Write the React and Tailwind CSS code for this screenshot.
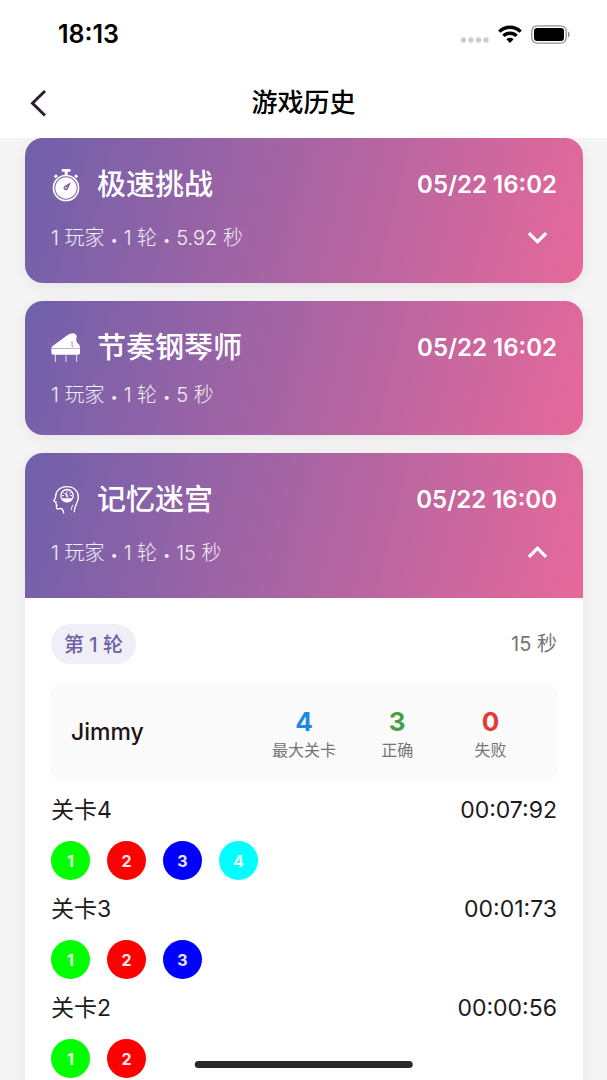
import React, { useState } from 'react';
import { MdExpandLess, MdExpandMore } from 'react-icons/md';

function StopwatchIcon() {
  return (
    <svg viewBox="0 0 90 99" className="w-[30px] h-[33px]" fill="none">
      <rect x="32" y="0" width="27" height="8" rx="3" fill="white" />
      <rect x="41" y="6" width="9" height="12" fill="white" />
      <path d="M11 25l7-6M79 25l-7-6" stroke="white" strokeWidth="8" />
      <circle cx="45" cy="57" r="37.5" stroke="white" strokeWidth="5" />
      <circle cx="45" cy="57" r="32" fill="white" />
      <path d="M60 40L51 59a7 7 0 1 1-9-9z" fill="#8062a8" />
      <circle cx="45" cy="56" r="2.5" fill="white" />
    </svg>
  );
}

function PianoIcon() {
  return (
    <svg viewBox="0 0 90 90" className="w-[30px] h-[30px]" fill="none">
      <path d="M1 45q0-3 4-6L50 6q14-8 23-3 6 5 3 13c-1 11 3 14 8 18q3 3 3 11z" fill="white" />
      <path d="M1 46.5h86v13q0 6-5 6H7q-6 0-6-6z" fill="white" />
      <path d="M63 24v16h5" stroke="#8a62a7" strokeWidth="2" />
      <path d="M13 65v22M45 65v22M77 65v22" stroke="white" strokeWidth="2.5" />
    </svg>
  );
}

function MemoryIcon() {
  return (
    <svg viewBox="0 0 90 90" className="w-[30px] h-[30px]" fill="none" stroke="white" strokeWidth="4" strokeLinecap="round" strokeLinejoin="round">
      <path d="M14 32C16 13 32 5 48 5c21 0 34 13 34 32 0 17-12 24-12 43" />
      <path d="M14 32c1 7-3 10-5 14-1 3 2 4 6 4v8l3 3-2 4c0 8 4 8 10 6 7-2 10 2 12 13" />
      <path d="M66 60c-4 5-5 10-5 14" strokeWidth="3" />
      <circle cx="48" cy="32" r="18.5" strokeWidth="4" />
      <path d="M32 40h32c-2 8-8 12-16 12s-14-4-16-12z" fill="white" stroke="none" />
      <path d="M48 18v4M37 23l3 3M59 23l-3 3M34 32h4M62 32h-4" strokeWidth="3" />
      <path d="M45 26l4 9" strokeWidth="5" />
    </svg>
  );
}

const COLORS = ['bg-[#00ff00]', 'bg-[#ff0000]', 'bg-[#0000ff]', 'bg-[#00ffff]'];

const games = [
  { id: 'speed', name: '极速挑战', date: '05/22 16:02', meta: ['1 玩家', '1 轮', '5.92 秒'], icon: StopwatchIcon, rounds: [] },
  { id: 'piano', name: '节奏钢琴师', date: '05/22 16:02', meta: ['1 玩家', '1 轮', '5 秒'], icon: PianoIcon },
  {
    id: 'memory',
    name: '记忆迷宫',
    date: '05/22 16:00',
    meta: ['1 玩家', '1 轮', '15 秒'],
    icon: MemoryIcon,
    rounds: [
      {
        title: '第 1 轮',
        duration: '15 秒',
        player: 'Jimmy',
        stats: [
          { label: '最大关卡', value: 4, color: 'text-[#1e88e5]' },
          { label: '正确', value: 3, color: 'text-[#43a047]' },
          { label: '失败', value: 0, color: 'text-[#e53935]' },
        ],
        levels: [
          { name: '关卡4', time: '00:07:92', steps: 4 },
          { name: '关卡3', time: '00:01:73', steps: 3 },
          { name: '关卡2', time: '00:00:56', steps: 2 },
        ],
      },
    ],
  },
];

function StatusBar() {
  return (
    <div className="h-[68px] pl-[58px] pr-[37px] flex items-center justify-between">
      <span className="text-[25px] leading-7 font-semibold">18:13</span>
      <div className="flex items-center gap-[9px]">
        <svg viewBox="0 0 30 20" className="w-[30px] h-5" fill="#cccccc">
          <circle cx="4.5" cy="16" r="2.7" />
          <circle cx="12" cy="16" r="2.7" />
          <circle cx="19.5" cy="16" r="2.7" />
          <circle cx="27" cy="16" r="2.7" />
        </svg>
        <svg viewBox="0 0 24 18" className="w-6 h-[18px]" fill="none" stroke="black" strokeWidth="3.4">
          <path d="M1.3 6.6a15.4 15.4 0 0 1 21.4 0" />
          <path d="M5.4 10.9a9.5 9.5 0 0 1 13.2 0" />
          <path d="M12 18l-3.6-3.8a5.2 5.2 0 0 1 7.2 0z" fill="black" stroke="none" />
        </svg>
        <svg viewBox="0 0 39 19" className="w-[39px] h-[19px]" fill="none">
          <rect x="0.8" y="0.8" width="34.4" height="17.4" rx="5.5" stroke="#8f8f8f" strokeWidth="1.3" />
          <rect x="3" y="3" width="30" height="13" rx="3.2" fill="black" />
          <path d="M37 6.5c2.2.8 2.2 5.2 0 6z" fill="#8f8f8f" />
        </svg>
      </div>
    </div>
  );
}

function LevelRow({ level }) {
  return (
    <div className="pt-[14px]">
      <div className="h-[31px] flex items-center justify-between text-[23px] leading-[31px] text-[#1c1b1c]">
        <span>{level.name}</span>
        <span>{level.time}</span>
      </div>
      <div className="mt-[15px] flex gap-[17px]">
        {COLORS.slice(0, level.steps).map((color, i) => (
          <span key={color} className={`size-[39px] rounded-full flex items-center justify-center text-base font-bold text-white/90 ${color}`}>
            {i + 1}
          </span>
        ))}
      </div>
    </div>
  );
}

function Round({ round }) {
  return (
    <div className="p-[26px]">
      <div className="flex items-center justify-between mb-[19px]">
        <h3 className="h-10 px-[13px] rounded-full bg-[#f0eff7] text-[#6f5fa8] text-[20px] leading-[42px] font-medium">{round.title}</h3>
        <span className="text-[20px] leading-7 text-[#757575]">{round.duration}</span>
      </div>
      <div className="h-[98px] px-5 rounded-xl bg-[#fafafa] flex items-center">
        <div className="flex-2 text-[23px] leading-8 font-medium text-[#1d1516]">{round.player}</div>
        {round.stats.map((stat) => (
          <div key={stat.label} className="flex-1 flex flex-col items-center pt-1">
            <span className={`text-[26px] leading-8 font-bold ${stat.color}`}>{stat.value}</span>
            <span className="text-base leading-6 whitespace-nowrap text-[#757575]">{stat.label}</span>
          </div>
        ))}
      </div>
      {round.levels.map((level) => (
        <LevelRow key={level.name} level={level} />
      ))}
    </div>
  );
}

function GameCard({ game, open, onToggle }) {
  const Icon = game.icon;
  const Chevron = open ? MdExpandLess : MdExpandMore;
  const expandable = Boolean(game.rounds);

  return (
    <section className="shrink-0 rounded-[18px] overflow-hidden bg-white shadow-[0_3px_16px_rgba(0,0,0,0.07)]">
      <button
        type="button"
        onClick={onToggle}
        disabled={!expandable}
        className="block w-full p-[26px] text-left text-white bg-[linear-gradient(104deg,#6f60ab,#e6699a)]"
      >
        <span className="h-[42px] flex items-center justify-between">
          <span className="flex items-center gap-4">
            <Icon />
            <span className="text-[29px] leading-[42px] font-medium">{game.name}</span>
          </span>
          <span className="text-[24px] leading-8 font-semibold">{game.date}</span>
        </span>
        <span className={`mt-3 flex items-center justify-between ${expandable ? 'h-[39px]' : 'h-7'}`}>
          <span className="text-[20px] leading-7 font-light text-white/90">
            {game.meta.map((item, i) => (
              <React.Fragment key={item}>
                {i > 0 && <> <span className="text-sm">•</span> </>}
                {item}
              </React.Fragment>
            ))}
          </span>
          {expandable && <Chevron className="size-[39px]" />}
        </span>
      </button>
      {open && game.rounds.map((round) => <Round key={round.title} round={round} />)}
    </section>
  );
}

export default function App() {
  const [openId, setOpenId] = useState('memory');

  return (
    <div className="h-screen flex flex-col overflow-hidden bg-[#f5f5f5] text-black font-[Inter,'Noto_Sans_CJK_SC',sans-serif]">
      <header className="shrink-0 bg-white">
        <StatusBar />
        <div className="h-[70px] px-[25px] grid grid-cols-[1fr_auto_1fr] items-center">
          <button type="button" aria-label="返回" className="size-7">
            <svg viewBox="0 0 28 28" className="size-7" fill="none" stroke="#2d1f2d" strokeWidth="3">
              <path d="M20 2L7.5 14.2 20 26.5" />
            </svg>
          </button>
          <h1 className="text-[26px] leading-9 font-medium">游戏历史</h1>
        </div>
      </header>

      <main className="flex-1 min-h-0 overflow-y-auto [scrollbar-width:none] pl-[25px] pr-6 flex flex-col gap-[18px]">
        {games.map((game) => (
          <GameCard
            key={game.id}
            game={game}
            open={openId === game.id}
            onToggle={() => setOpenId(openId === game.id ? null : game.id)}
          />
        ))}
      </main>

      {/* Home indicator */}
      <div className="fixed bottom-3 left-1/2 -translate-x-1/2 w-[36%] h-[7px] rounded-full bg-[#2b2a2b]" />
    </div>
  );
}
